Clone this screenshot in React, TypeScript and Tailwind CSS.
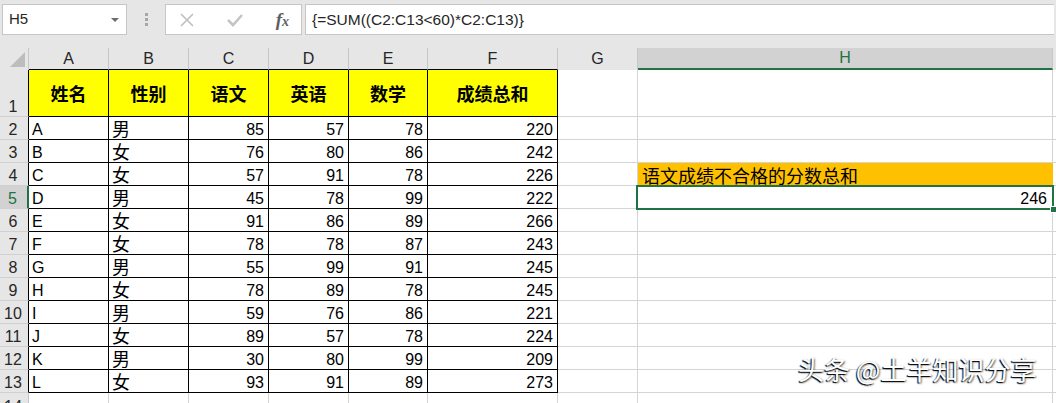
import React from 'react';

const cellFont = "font-[family-name:'Liberation_Sans','Noto_Sans_CJK_SC',sans-serif]";

const cols = [
  { key: 'A', w: 'w-[80px]' },
  { key: 'B', w: 'w-[80px]' },
  { key: 'C', w: 'w-[80px]' },
  { key: 'D', w: 'w-[80px]' },
  { key: 'E', w: 'w-[79px]' },
  { key: 'F', w: 'w-[130px]' },
  { key: 'G', w: 'w-[80px]' },
  { key: 'H', w: 'w-[415px]' },
];

const titles = ['姓名', '性别', '语文', '英语', '数学', '成绩总和'];

const data: [string, string, number, number, number, number][] = [
  ['A', '男', 85, 57, 78, 220],
  ['B', '女', 76, 80, 86, 242],
  ['C', '女', 57, 91, 78, 226],
  ['D', '男', 45, 78, 99, 222],
  ['E', '女', 91, 86, 89, 266],
  ['F', '女', 78, 78, 87, 243],
  ['G', '男', 55, 99, 91, 245],
  ['H', '女', 78, 89, 78, 245],
  ['I', '男', 59, 76, 86, 221],
  ['J', '女', 89, 57, 78, 224],
  ['K', '男', 30, 80, 99, 209],
  ['L', '女', 93, 91, 89, 273],
];

function FormulaBar() {
  return (
    <div className="flex h-[48px] items-start gap-0 bg-[#e6e6e6] px-[2px] pt-[4px] font-[family-name:'Liberation_Sans',sans-serif]">
      <div className="flex h-[31px] w-[125px] items-center justify-between border border-[#c6c6c6] bg-white pl-[6px] pr-[7px] text-[15px] text-[#262626]">
        <span>H5</span>
        <span className="h-0 w-0 border-x-[4px] border-t-[4px] border-x-transparent border-t-[#6d6d6d]" />
      </div>
      <div className="flex h-[31px] w-[38px] flex-col items-center justify-center gap-[2px]">
        <span className="h-[3px] w-[3px] bg-[#a6a6a6]" />
        <span className="h-[3px] w-[3px] bg-[#a6a6a6]" />
        <span className="h-[3px] w-[3px] bg-[#a6a6a6]" />
      </div>
      <div className="flex h-[31px] w-[137px] items-center justify-between border border-[#c6c6c6] bg-white pl-[13px] pr-[12px]">
        <svg width="16" height="16" viewBox="0 0 16 16" fill="none" stroke="#bfbfbf" strokeWidth="1.6">
          <path d="M2 2 L14 14 M14 2 L2 14" />
        </svg>
        <svg width="18" height="16" viewBox="0 0 18 16" fill="none" stroke="#c4c4c4" strokeWidth="2.6">
          <path d="M2 8 L7 13 L16 3" />
        </svg>
        <span className="font-[family-name:'Liberation_Serif',serif] text-[19px] italic font-bold leading-none text-[#5f5f5f]">
          f<span className="text-[14px]">x</span>
        </span>
      </div>
      <div className="ml-[3px] flex h-[31px] flex-1 items-center border border-[#c6c6c6] border-r-0 bg-white pl-[6px] text-[15.5px] text-[#262626]">
        {'{=SUM((C2:C13<60)*C2:C13)}'}
      </div>
    </div>
  );
}

function HeaderRow() {
  return (
    <div className={`flex h-[22px] bg-[#e6e6e6] text-[16px] text-[#262626] ${cellFont}`}>
      <div className="relative w-[29px] shrink-0 border-r border-[#c6c6c6]">
        <span className="absolute bottom-[3px] right-[3px] h-0 w-0 border-b-[15px] border-l-[15px] border-b-[#bdbdbd] border-l-transparent" />
      </div>
      {cols.map((c, i) => {
        if (c.key === 'H') {
          return (
            <div
              key={c.key}
              className={`${c.w} flex shrink-0 items-center justify-center border-b-2 border-r border-b-[#217346] border-r-[#c6c6c6] bg-[#d2d2d2] text-[#217346]`}
            >
              {c.key}
            </div>
          );
        }
        return (
          <div
            key={c.key}
            className={`${c.w} flex shrink-0 items-center justify-center border-b border-r border-r-[#c6c6c6] ${
              i < 6 ? 'border-b-black' : 'border-b-[#e6e6e6]'
            }`}
          >
            {c.key}
          </div>
        );
      })}
      <div className="flex-1" />
    </div>
  );
}

function RowHeader({ n, h }: { n: number; h: string }) {
  const active = n === 5;
  return (
    <div
      className={`${h} flex w-[29px] shrink-0 items-end justify-center border-b border-b-[#d0d0d0] pr-[2px] text-[16px] leading-[18px] ${
        active
          ? 'border-r-2 border-r-[#217346] bg-[#d2d2d2] text-[#217346]'
          : n <= 13
          ? 'border-r border-r-black bg-[#e6e6e6] text-[#262626]'
          : 'border-r border-r-[#c6c6c6] bg-[#e6e6e6] text-[#262626]'
      }`}
    >
      {n}
    </div>
  );
}

export default function App() {
  return (
    <div className="relative h-[403px] w-[1056px] overflow-hidden bg-white">
      <FormulaBar />
      <HeaderRow />

      {/* row 1: titles */}
      <div className={`flex h-[47px] ${cellFont}`}>
        <RowHeader n={1} h="h-[47px]" />
        {titles.map((t, i) => (
          <div
            key={t}
            className={`${cols[i].w} flex shrink-0 items-center justify-center border-b border-r border-black bg-[#ffff00] pt-[4px] text-[18px] font-bold text-black`}
          >
            {t}
          </div>
        ))}
        <div className="w-[80px] shrink-0 border-b border-r border-[#d4d4d4]" />
        <div className="w-[415px] shrink-0 border-b border-r border-[#d4d4d4]" />
        <div className="flex-1 border-b border-[#d4d4d4]" />
      </div>

      {data.map((r, idx) => {
        const n = idx + 2;
        return (
          <div key={n} className={`flex h-[23px] text-[16px] leading-[18px] text-black ${cellFont}`}>
            <RowHeader n={n} h="h-[23px]" />
            <div className="flex w-[80px] shrink-0 items-end border-b border-r border-black pl-[3px]">{r[0]}</div>
            <div className="flex w-[80px] shrink-0 items-end border-b border-r border-black pl-[3px] text-[18px]">{r[1]}</div>
            <div className="flex w-[80px] shrink-0 items-end justify-end border-b border-r border-black pr-[4px]">{r[2]}</div>
            <div className="flex w-[80px] shrink-0 items-end justify-end border-b border-r border-black pr-[4px]">{r[3]}</div>
            <div className="flex w-[79px] shrink-0 items-end justify-end border-b border-r border-black pr-[4px]">{r[4]}</div>
            <div className="flex w-[130px] shrink-0 items-end justify-end border-b border-r border-black pr-[4px]">{r[5]}</div>
            <div className="w-[80px] shrink-0 border-b border-r border-[#d4d4d4]" />
            {n === 4 ? (
              <div className="flex w-[415px] shrink-0 items-end bg-[#ffc000] pl-[4px] text-[18px]">
                语文成绩不合格的分数总和
              </div>
            ) : n === 5 ? (
              <div className="relative flex w-[415px] shrink-0 items-end justify-end border-b border-r border-[#d4d4d4] pr-[5px]">
                246
                <span className="absolute -bottom-[2px] -left-[2px] -right-[2px] -top-[1px] border-2 border-[#217346]" />
                <span className="absolute -bottom-[5px] -right-[5px] h-[7px] w-[7px] border border-white bg-[#217346]" />
              </div>
            ) : (
              <div className="w-[415px] shrink-0 border-b border-r border-[#d4d4d4]" />
            )}
            <div className="flex-1 border-b border-[#d4d4d4]" />
          </div>
        );
      })}

      {/* row 14 */}
      <div className="flex h-[23px]">
        <RowHeader n={14} h="h-[23px]" />
        {cols.map((c) => (
          <div key={c.key} className={`${c.w} shrink-0 border-b border-r border-[#d4d4d4]`} />
        ))}
        <div className="flex-1 border-b border-[#d4d4d4]" />
      </div>

      <div className="absolute left-[798px] top-[356px] font-[family-name:'Noto_Sans_CJK_SC',sans-serif] text-[26px] leading-none text-white [text-shadow:-1px_1px_1px_#000,1px_1px_2px_rgba(0,0,0,0.6)]">
        头条 @土羊知识分享
      </div>
    </div>
  );
}
